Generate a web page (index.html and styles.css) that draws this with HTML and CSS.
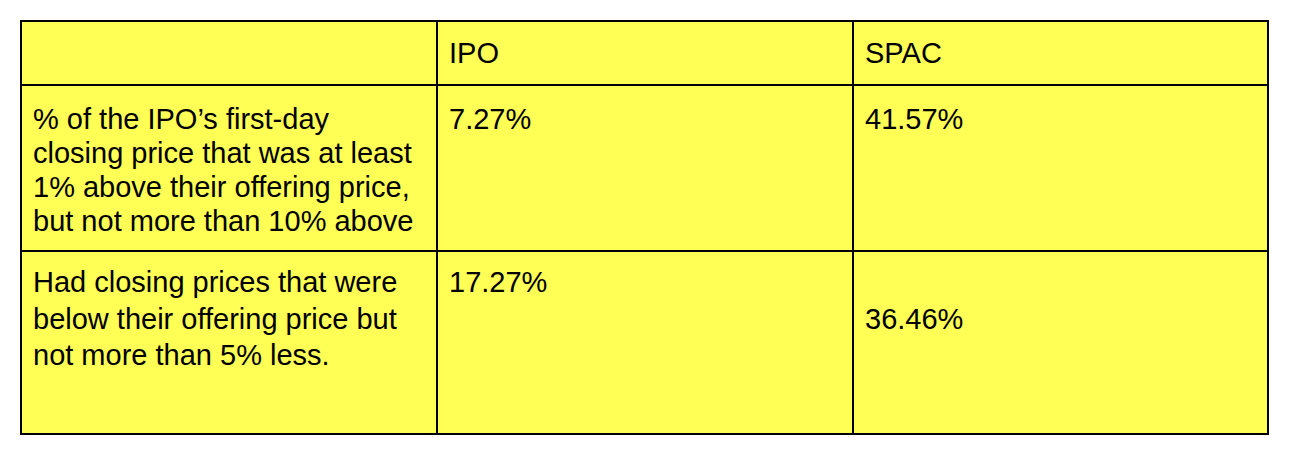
FILE: index.html
```html
<!DOCTYPE html>
<html lang="en">
<head>
<meta charset="utf-8">
<title>IPO vs SPAC</title>
<link rel="stylesheet" href="styles.css">
</head>
<body>
<div class="table">
  <div class="cell cell--head"></div>
  <div class="cell cell--head">IPO</div>
  <div class="cell cell--head">SPAC</div>

  <div class="cell">% of the IPO’s first-day<br>closing price that was at least<br>1% above their offering price,<br>but not more than 10% above</div>
  <div class="cell">7.27%</div>
  <div class="cell">41.57%</div>

  <div class="cell cell--loose">Had closing prices that were<br>below their offering price but<br>not more than 5% less.</div>
  <div class="cell cell--loose">17.27%</div>
  <div class="cell cell--loose"><br>36.46%</div>
</div>
</body>
</html>
```

FILE: styles.css
```css
html, body {
  margin: 0;
  padding: 0;
  background: #ffffff;
}

body {
  padding: 20px;
  font-family: "Liberation Sans", Arial, sans-serif;
  color: #000000;
}

.table {
  display: grid;
  grid-template-columns: 414px 414px 413px;
  grid-template-rows: 62px 164px 181px;
  gap: 2px;
  padding: 2px;
  width: max-content;
  background: #000000;
}

.cell {
  background: #ffff55;
  font-size: 29px;
  line-height: 34px;
  padding: 16px 11px 0 11px;
  white-space: nowrap;
}

.cell--head {
  padding-top: 14px;
}

.cell--loose {
  line-height: 36.5px;
  padding-top: 12px;
}
```
